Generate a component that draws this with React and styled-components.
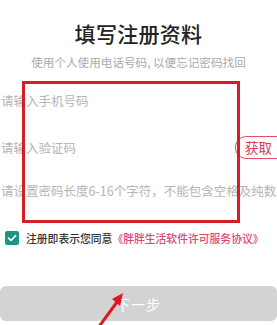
import React from "react";
import styled, { createGlobalStyle } from "styled-components";

const Global = createGlobalStyle`
  html, body { margin: 0; padding: 0; background: #fff; }
  body { font-family: "Noto Sans CJK SC", "Noto Sans", sans-serif; overflow: hidden; }
`;

const Page = styled.div`
  position: relative;
  width: 277px;
  height: 325px;
  overflow: hidden;
  background: #fff;
  display: flex;
  flex-direction: column;
`;

const Title = styled.h1`
  margin: 19px 0 0;
  font-size: 21px;
  line-height: 28px;
  font-weight: 500;
  color: #222;
  text-align: center;
  letter-spacing: 0.3px;
`;

const Subtitle = styled.p`
  margin: 7px 0 0;
  font-size: 11.6px;
  line-height: 16px;
  color: #aaa;
  text-align: center;
`;

const Form = styled.div`
  margin-top: 7px;
  display: flex;
  flex-direction: column;
`;

const Row = styled.div`
  height: ${(p) => p.$h}px;
  display: flex;
  align-items: center;
  justify-content: space-between;
  padding-left: 1px;
`;

const Placeholder = styled.span`
  font-size: 12.5px;
  color: #b5b5b5;
  white-space: nowrap;
`;

const CodeButton = styled.span`
  flex: none;
  margin-right: -12px;
  height: 21px;
  padding: 0 16px 0 9px;
  border: 1px solid #e0506a;
  border-radius: 11px;
  display: flex;
  align-items: center;
  font-size: 13.5px;
  color: #d93a55;
`;

const Agree = styled.div`
  margin-top: 21px;
  display: flex;
  align-items: center;
  gap: 7px;
  padding-left: 5px;
  height: 16px;
`;

const Check = styled.span`
  width: 14px;
  height: 14px;
  border-radius: 2px;
  background: #1f9486;
  display: flex;
  align-items: center;
  justify-content: center;
`;

const AgreeText = styled.span`
  font-size: 10.8px;
  color: #333;
  font-weight: 500;
  white-space: nowrap;
`;

const Link = styled.span`
  color: #e0457a;
`;

const NextButton = styled.div`
  margin-top: 40px;
  height: 35px;
  border-radius: 6px;
  background: #d3d3d3;
  display: flex;
  align-items: center;
  justify-content: center;
  color: #fff;
  font-size: 14px;
  letter-spacing: 1px;
`;

const Highlight = styled.div`
  position: absolute;
  left: 22px;
  top: 81px;
  width: 212px;
  height: 136px;
  border: 3px solid #d41f26;
  pointer-events: none;
`;

const Arrow = styled.svg`
  position: absolute;
  left: 90px;
  top: 288px;
  pointer-events: none;
`;

export default function App() {
  return (
    <>
      <Global />
      <Page>
        <Title>填写注册资料</Title>
        <Subtitle>使用个人使用电话号码, 以便忘记密码找回</Subtitle>
        <Form>
          <Row $h={46}>
            <Placeholder>请输入手机号码</Placeholder>
          </Row>
          <Row $h={48}>
            <Placeholder>请输入验证码</Placeholder>
            <CodeButton>获取</CodeButton>
          </Row>
          <Row $h={38}>
            <Placeholder>请设置密码长度6-16个字符，不能包含空格及纯数字</Placeholder>
          </Row>
        </Form>
        <Agree>
          <Check>
            <svg width="10" height="10" viewBox="0 0 10 10">
              <path d="M1.5 5.2 L4 7.5 L8.6 2.6" fill="none" stroke="#fff" strokeWidth="1.6" strokeLinecap="round" strokeLinejoin="round" />
            </svg>
          </Check>
          <AgreeText>
            注册即表示您同意<Link>《胖胖生活软件许可服务协议》</Link>
          </AgreeText>
        </Agree>
        <NextButton>下一步</NextButton>
        <Highlight />
        <Arrow width="40" height="40" viewBox="0 0 40 40">
          <path d="M8 40 L27 14" stroke="#e3161c" strokeWidth="3" strokeLinecap="round" fill="none" />
          <polygon points="33,5 22,11 30,18" fill="#e3161c" />
        </Arrow>
      </Page>
    </>
  );
}
